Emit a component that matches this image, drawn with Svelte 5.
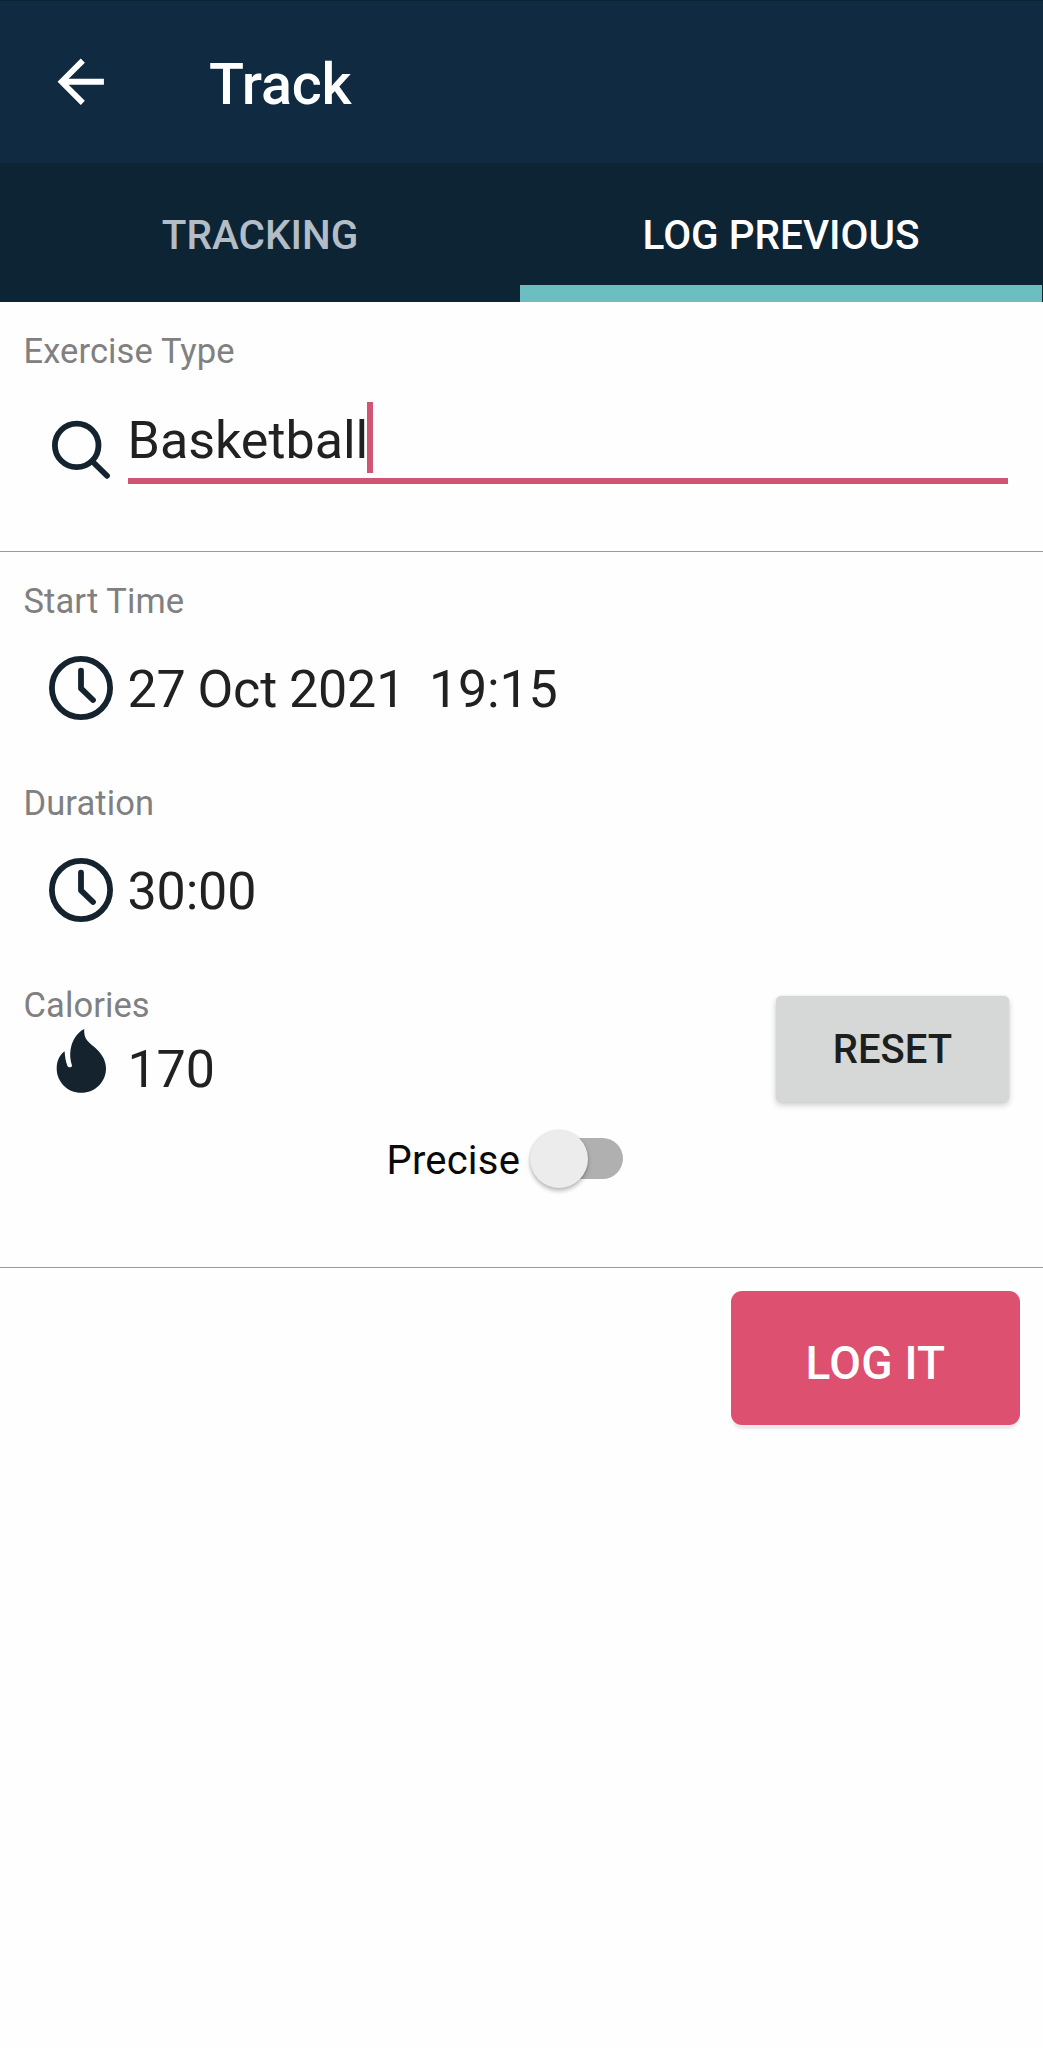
<script>
  let exercise = $state('Basketball');
  let precise = $state(false);
</script>

{#snippet clock()}
  <svg class="icon" viewBox="0 0 64 64" aria-hidden="true">
    <circle cx="32" cy="32" r="29.1" fill="none" stroke="#15232f" stroke-width="5.8" />
    <path d="M32 14.6V32.4L44 44" fill="none" stroke="#15232f" stroke-width="5.8" stroke-linecap="round" stroke-linejoin="round" />
  </svg>
{/snippet}

<div class="screen">
  <header>
    <svg class="back" viewBox="0 0 24 24" aria-label="Back">
      <path d="M20 11H7.83l5.59-5.59L12 4l-8 8 8 8 1.41-1.41L7.83 13H20z" fill="#fff" />
    </svg>
    <h1>Track</h1>
  </header>

  <nav>
    <div class="tab">TRACKING</div>
    <div class="tab active">LOG PREVIOUS</div>
  </nav>

  <section class="exercise">
    <div class="label">Exercise Type</div>
    <div class="search">
      <svg class="glass" viewBox="0 0 60 60" aria-hidden="true">
        <circle cx="25.7" cy="25.4" r="21.8" fill="none" stroke="#15232f" stroke-width="5.8" />
        <path d="M42.2 42.2L56 55.8" stroke="#15232f" stroke-width="5.8" stroke-linecap="round" />
      </svg>
      <div class="input"><span class="typed">{exercise}</span><span class="cursor"></span></div>
    </div>
  </section>

  <section class="details">
    <div class="label">Start Time</div>
    <div class="row">
      {@render clock()}
      <span class="value date">27 Oct 2021&nbsp; 19:15</span>
    </div>

    <div class="label">Duration</div>
    <div class="row">
      {@render clock()}
      <span class="value">30:00</span>
    </div>

    <div class="calories">
      <div>
        <div class="label">Calories</div>
        <div class="row burn">
          <svg class="icon" viewBox="0 0 64 64" aria-hidden="true">
            <path
              d="M35.2 0C35 5 35.800 8.500 38 11.300C41 15 44.500 17 48 20.500C53.500 26 57 32 57 39.500C57 53 46 63.800 32.300 63.800C18.500 63.800 7.700 53 7.700 39.500C7.700 32.300 10.400 26 15.600 22.300C16 28 16.700 33 18.600 37.200C19.400 38.700 23.300 38.700 23 36.500C21.200 31 20.700 26 21.600 20.500C23 11.500 28 3.500 35.200 0Z"
              fill="#15232f"
            />
          </svg>
          <span class="value">170</span>
        </div>
      </div>
      <button class="reset">RESET</button>
    </div>

    <label class="precise">
      <span>Precise</span>
      <span class="switch" class:on={precise}><span class="thumb"></span></span>
    </label>
  </section>

  <footer>
    <button class="log">LOG IT</button>
  </footer>
</div>

<style>
  :global(body) {
    background: #fefefe;
  }

  .screen {
    width: 1043px;
    height: 2048px;
    overflow: hidden;
    background: #fefefe;
    font-family: Roboto, sans-serif;
    color: #212121;
  }

  header {
    display: flex;
    align-items: center;
    box-sizing: border-box;
    height: 163px;
    padding: 0 0 0 46px;
    background: #102b41;
    border-top: 1px solid #0c2333;
  }

  .back {
    width: 69.5px;
    height: 69.5px;
    margin-right: 93.5px;
  }

  h1 {
    margin: 5px 0 0;
    font-size: 57.5px;
    line-height: 70px;
    font-weight: 500;
    letter-spacing: -0.2px;
    color: #fff;
  }

  nav {
    display: grid;
    grid-template-columns: 520px 522px;
    height: 139px;
    background: #0d2435;
  }

  .tab {
    box-sizing: border-box;
    padding-top: 43px;
    border-bottom: 17px solid transparent;
    text-align: center;
    font-size: 40.5px;
    line-height: 59px;
    font-weight: 500;
    color: #b2bdc6;
  }

  .tab.active {
    color: #fff;
    border-bottom-color: #6bbfc0;
  }

  .label {
    padding-left: 23.5px;
    font-size: 34.5px;
    line-height: 40px;
    letter-spacing: 0.1px;
    color: #808080;
  }

  .exercise {
    box-sizing: border-box;
    height: 250px;
    padding-top: 29px;
    border-bottom: 1px solid #9a9a9a;
  }

  .search {
    display: flex;
    padding: 31px 35px 0 51px;
  }

  .glass {
    flex: none;
    width: 60px;
    height: 60px;
    margin: 18px 16.5px 0 0;
  }

  .input {
    display: flex;
    flex: 1;
    height: 76px;
    border-bottom: 6px solid #cf5572;
    font-size: 52px;
    line-height: 76px;
  }

  .typed {
    line-height: 78px;
  }

  .cursor {
    width: 6px;
    height: 71px;
    margin-left: -1px;
    background: #cf5572;
  }

  .details {
    box-sizing: border-box;
    height: 716px;
    padding-top: 29px;
    border-bottom: 1px solid #9a9a9a;
  }

  .row {
    display: flex;
    align-items: center;
    height: 64px;
    padding: 35px 0 63px 49px;
  }

  .icon {
    flex: none;
    width: 64px;
    height: 64px;
    margin-right: 14.5px;
  }

  .value {
    margin-top: 3px;
    font-size: 52px;
    line-height: 64px;
    letter-spacing: -0.15px;
  }

  .date {
    word-spacing: -0.9px;
  }

  .calories {
    display: flex;
    justify-content: space-between;
    height: 118px;
    padding-right: 34px;
  }

  .burn {
    padding: 4px 0 0 49px;
  }

  .burn .value {
    margin-top: 17px;
  }

  button {
    border: 0;
    font-family: inherit;
    font-weight: 500;
    text-align: center;
  }

  .reset {
    width: 233px;
    height: 106px;
    margin-top: 11px;
    padding: 1px 0 0;
    border-radius: 5px;
    background: #d6d8d7;
    box-shadow: 0 3px 6px rgba(0, 0, 0, 0.2), 0 0 2px rgba(0, 0, 0, 0.08);
    font-size: 40px;
    color: #1d1f1e;
  }

  .precise {
    display: flex;
    align-items: center;
    width: max-content;
    margin: 28px 0 0 386.5px;
    font-size: 40px;
    line-height: 60px;
    letter-spacing: 0.2px;
    color: #0a0a0a;
  }

  .switch {
    display: flex;
    align-items: center;
    width: 83px;
    height: 41px;
    margin: -5px 0 0 19.5px;
    border-radius: 20.5px;
    background: #b0b0b0;
  }

  .switch.on {
    justify-content: flex-end;
  }

  .thumb {
    width: 58px;
    height: 58px;
    margin-left: -10px;
    border-radius: 50%;
    background: #ececec;
    box-shadow: 0 3px 4px rgba(0, 0, 0, 0.26), 0 0 2px rgba(0, 0, 0, 0.12);
  }

  footer {
    display: flex;
    justify-content: flex-end;
    padding: 23px 23px 0 0;
  }

  .log {
    width: 289px;
    height: 133.5px;
    padding: 10px 0 0;
    border-radius: 11px;
    background: #dd506f;
    box-shadow: 0 5px 2px -1px #eee8ea;
    font-size: 46px;
    letter-spacing: 0.25px;
    color: #fff;
  }
</style>
